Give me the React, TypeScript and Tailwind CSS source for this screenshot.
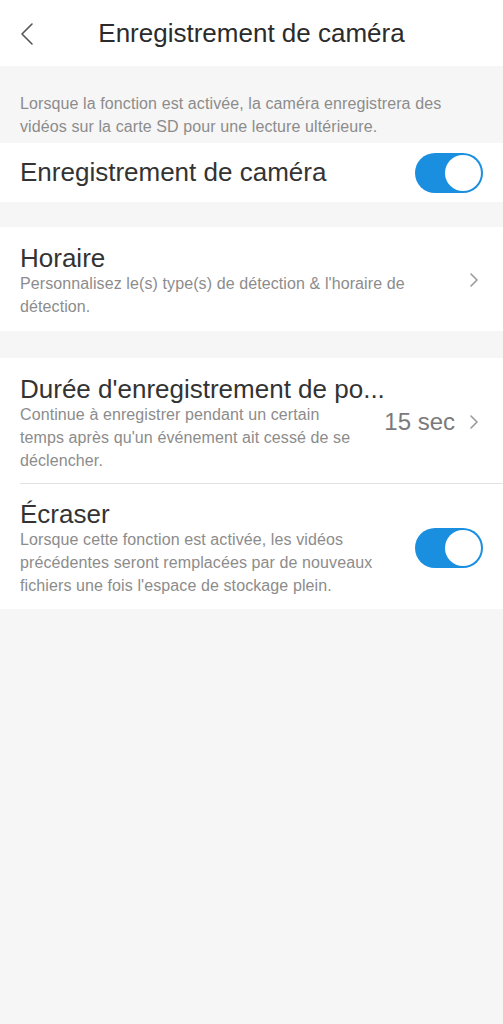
import React from "react";

const font = { fontFamily: '"Liberation Sans", Arial, sans-serif' };

function Toggle() {
  return (
    <div className="w-[68px] h-[40px] rounded-full bg-[#1a8fe0] flex items-center justify-end pr-[2px] shrink-0">
      <div className="w-[36px] h-[36px] rounded-full bg-white" />
    </div>
  );
}

function Chevron({ className = "" }: { className?: string }) {
  return (
    <svg width="10" height="16" viewBox="0 0 10 16" className={className}>
      <path d="M2 2 L8 8 L2 14" fill="none" stroke="#9a9a9a" strokeWidth="1.6" strokeLinecap="round" strokeLinejoin="round" />
    </svg>
  );
}

export default function App() {
  return (
    <div className="w-[503px] min-h-[1024px] bg-[#f6f6f6]" style={font}>
      <div className="h-[66px] bg-white relative flex items-center justify-center">
        <svg width="14" height="24" viewBox="0 0 14 24" className="absolute left-[20px] top-[22px]">
          <path d="M12 2 L2 12 L12 22" fill="none" stroke="#555" strokeWidth="1.6" strokeLinecap="round" strokeLinejoin="round" />
        </svg>
        <div className="text-[26px] text-[#2b2b2b] leading-[30px]">Enregistrement de caméra</div>
      </div>

      <div className="pt-[26px] pb-[5px] px-[20px] text-[16px] leading-[23px] text-[#8c8c8c] tracking-[0.1px]">
        Lorsque la fonction est activée, la caméra enregistrera des vidéos sur la carte SD pour une lecture ultérieure.
      </div>

      <div className="h-[59px] bg-white flex items-center justify-between pl-[20px] pr-[20px]">
        <div className="text-[26px] text-[#333]">Enregistrement de caméra</div>
        <Toggle />
      </div>

      <div className="h-[25px]" />

      <div className="bg-white flex items-center pl-[20px] pr-[24px] pt-[17px] pb-[13px]">
        <div className="flex-1">
          <div className="text-[26px] leading-[28px] text-[#333]">Horaire</div>
          <div className="text-[16px] leading-[23px] text-[#8c8c8c] w-[410px] tracking-[0.1px]">
            Personnalisez le(s) type(s) de détection &amp; l'horaire de détection.
          </div>
        </div>
        <Chevron className="-mt-[2px]" />
      </div>

      <div className="h-[27px]" />

      <div className="bg-white">
        <div className="flex items-center pl-[20px] pr-[24px] pt-[17px] pb-[11px]">
          <div className="flex-1 min-w-0">
            <div className="text-[26px] leading-[28px] text-[#333] whitespace-nowrap">Durée d'enregistrement de po...</div>
            <div className="text-[16px] leading-[23px] text-[#8c8c8c] w-[340px] tracking-[0.1px]">
              Continue à enregistrer pendant un certain temps après qu'un événement ait cessé de se déclencher.
            </div>
          </div>
          <div className="flex items-center gap-[14px] -mt-[3px] shrink-0">
            <span className="text-[24px] text-[#7a7a7a] whitespace-nowrap">15 sec</span>
            <Chevron />
          </div>
        </div>
        <div className="ml-[20px] h-px bg-[#e2e2e2]" />
        <div className="flex items-center pl-[20px] pr-[20px] pt-[16px] pb-[12px]">
          <div className="flex-1">
            <div className="text-[26px] leading-[28px] text-[#333]">Écraser</div>
            <div className="text-[16px] leading-[23px] text-[#8c8c8c] w-[380px] tracking-[0.1px]">
              Lorsque cette fonction est activée, les vidéos précédentes seront remplacées par de nouveaux fichiers une fois l'espace de stockage plein.
            </div>
          </div>
          <div className="-mt-[2px]">
            <Toggle />
          </div>
        </div>
      </div>
    </div>
  );
}
